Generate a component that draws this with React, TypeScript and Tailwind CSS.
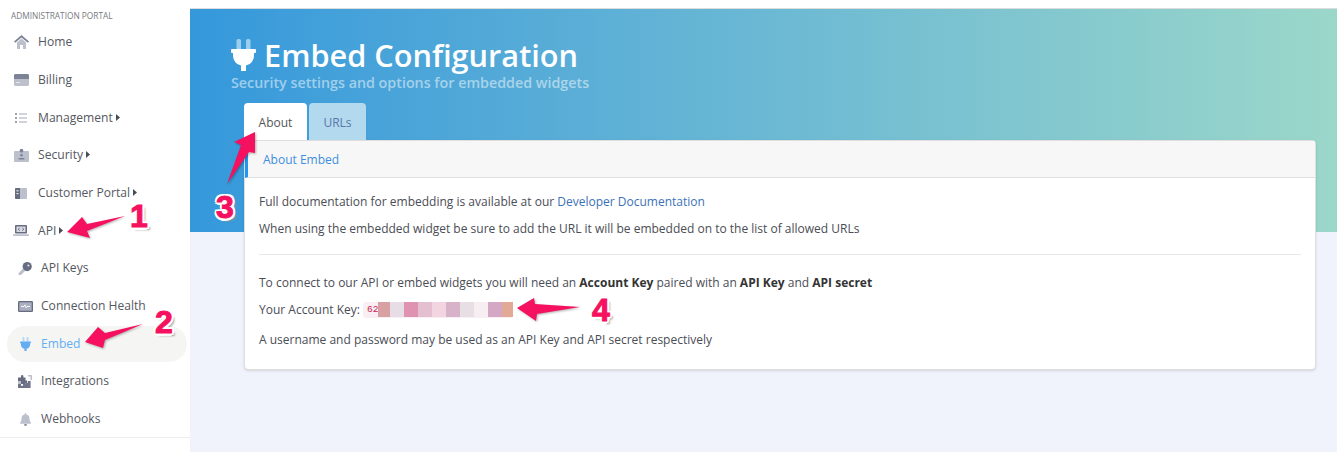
import type { ReactNode } from "react";

const D = "#7d8396";
const L = "#bcc0cd";

const Svg = ({ w, h, vb, children }: { w: number; h: number; vb: string; children: ReactNode }) => (
  <svg width={w} height={h} viewBox={vb} className="shrink-0">{children}</svg>
);

const HomeI = () => (
  <Svg w={15} h={14} vb="0 0 15 14">
    <path d="M3 7.5 7.5 3.6 12 7.5V14H9V10H6v4H3z" fill={L} />
    <path d="M7.5 0 15 6.4 13.8 7.8 7.5 2.5 1.2 7.8 0 6.4z" fill={D} />
  </Svg>
);
const CardI = () => (
  <Svg w={15} h={12} vb="0 0 15 12">
    <rect width="15" height="12" rx="1.5" fill={L} />
    <path d="M1.5 0h12A1.5 1.5 0 0 1 15 1.5V5H0V1.5A1.5 1.5 0 0 1 1.5 0z" fill={D} />
    <rect x="2" y="8" width="4" height="1" fill="#e4e6ec" />
  </Svg>
);
const ListI = () => (
  <Svg w={12} h={10} vb="0 0 12 10">
    <rect x="0" y="0" width="2" height="2" rx="1" fill={D} />
    <rect x="0" y="4" width="2" height="2" rx="1" fill={D} />
    <rect x="0" y="8" width="2" height="2" rx="1" fill={D} />
    <rect x="4" y="0.3" width="8" height="1.4" fill={L} />
    <rect x="4" y="4.3" width="8" height="1.4" fill={L} />
    <rect x="4" y="8.3" width="8" height="1.4" fill={L} />
  </Svg>
);
const BadgeI = () => (
  <Svg w={15} h={13} vb="0 0 15 13">
    <rect y="2" width="15" height="11" rx="1" fill={L} />
    <rect x="5.8" y="0" width="3.4" height="3.4" rx="0.8" fill={D} />
    <circle cx="7.5" cy="6.3" r="1.3" fill={D} />
    <rect x="4.6" y="9" width="5.8" height="1.6" rx="0.4" fill={D} />
  </Svg>
);
const BookI = () => (
  <Svg w={12} h={11} vb="0 0 12 11">
    <rect width="12" height="11" rx="1" fill={L} />
    <path d="M1 0h4v11H1a1 1 0 0 1-1-1V1a1 1 0 0 1 1-1z" fill="#676d80" />
    <rect x="1.5" y="2.2" width="2" height="1.2" fill="#e4e6ec" />
    <rect x="1.5" y="5" width="2" height="1.2" fill="#e4e6ec" />
  </Svg>
);
const LaptopI = () => (
  <Svg w={16} h={11} vb="0 0 16 11">
    <rect x="2" y="0" width="12" height="8.5" rx="0.8" fill="#676d80" />
    <rect x="3.5" y="1.5" width="9" height="5.5" fill="#d9dbe3" />
    <path d="M6.7 3 5.2 4.3 6.7 5.5M9.3 3l1.5 1.3-1.5 1.2" stroke="#5a6072" strokeWidth="1" fill="none" />
    <rect x="0" y="9.3" width="16" height="1.7" rx="0.7" fill={L} />
  </Svg>
);
const KeyI = () => (
  <Svg w={14} h={13} vb="0 0 14 13">
    <path d="M5.6 6 0.6 11v2h2.4l5-5z" fill={L} />
    <circle cx="9.2" cy="4.6" r="4.6" fill="#676d80" />
    <circle cx="10.4" cy="3.4" r="1" fill="#e4e6ec" />
  </Svg>
);
const PulseI = () => (
  <Svg w={15} h={11} vb="0 0 15 11">
    <rect width="15" height="11" rx="1.2" fill="#676d80" />
    <rect x="1.3" y="1.3" width="12.4" height="8.4" fill="#aab0bf" />
    <path d="M3 5.5h3l1-1.6 1.2 3 .8-1.4h3" stroke="#fff" strokeWidth="0.9" fill="none" />
  </Svg>
);
const PlugI = ({ w, h, body, prong }: { w: number; h: number; body: string; prong: string }) => (
  <Svg w={w} h={h} vb="0 0 25 32">
    <rect x="5.5" y="0" width="4.5" height="11" rx="1.5" fill={prong} />
    <rect x="15" y="0" width="4.5" height="11" rx="1.5" fill={prong} />
    <path d="M1 10h23a1 1 0 0 1 1 1v2a1 1 0 0 1-1 1h-1v3a10 10 0 0 1-8 9.6V32H10v-5.4A10 10 0 0 1 2 17v-3H1a1 1 0 0 1-1-1v-2a1 1 0 0 1 1-1z" fill={body} />
  </Svg>
);
const PuzzleI = () => (
  <Svg w={14} h={13} vb="0 0 14 13">
    <path d="M0 2.5h3V1.2a1.2 1.2 0 0 1 2.4 0V2.5H7.5v3H9V8H7.5v1H0z" fill="#676d80" />
    <path d="M0 9h3v1a1 1 0 0 0 2 0V9h2.5V8H9a1 1 0 0 0 0-2h3.6v7H0z" fill="#70768a" />
    <path d="M10 0h3.2A.8.8 0 0 1 14 .8V5h-1.6V1.6H10z" fill={L} />
    <path d="M0 6h3v3H0z" fill={L} />
  </Svg>
);
const BellI = () => (
  <Svg w={11} h={13} vb="0 0 11 13">
    <path d="M5.5 0C6 0 6.3.4 6.3.9v.5A3.8 3.8 0 0 1 9.4 5.2c0 3.3 1.6 4.2 1.6 4.9 0 .4-.3.7-.7.7H.7c-.4 0-.7-.3-.7-.7 0-.7 1.6-1.6 1.6-4.9A3.8 3.8 0 0 1 4.7 1.4V.9C4.7.4 5 0 5.5 0z" fill={L} />
    <path d="M3.9 11.3h3.2a1.6 1.6 0 0 1-3.2 0z" fill={D} />
  </Svg>
);

type Item = { icon: ReactNode; label: string; caret?: boolean; sub?: boolean; active?: boolean };

const items: Item[] = [
  { icon: <HomeI />, label: "Home" },
  { icon: <CardI />, label: "Billing" },
  { icon: <ListI />, label: "Management", caret: true },
  { icon: <BadgeI />, label: "Security", caret: true },
  { icon: <BookI />, label: "Customer Portal", caret: true },
  { icon: <LaptopI />, label: "API", caret: true },
  { icon: <KeyI />, label: "API Keys", sub: true },
  { icon: <PulseI />, label: "Connection Health", sub: true },
  { icon: <PlugI w={11} h={14} body="#63aef2" prong="#b7d8f7" />, label: "Embed", sub: true, active: true },
  { icon: <PuzzleI />, label: "Integrations", sub: true },
  { icon: <BellI />, label: "Webhooks", sub: true },
];

function Row({ item }: { item: Item }) {
  return (
    <div className={`flex h-[36px] mb-[1.7px] items-center rounded-[18px] ${item.sub ? "pl-[10px]" : "pl-[6px]"} ${item.active ? "bg-[#f5f5f3] text-[#63aef2]" : "text-[#55585f]"}`}>
      <span className="flex w-[16px] shrink-0 items-center justify-center">{item.icon}</span>
      <span className={`${item.sub ? "ml-[8px]" : "ml-[9px]"} text-[12.1px] leading-none`}>{item.label}</span>
      {item.caret && (
        <svg width="4" height="7" viewBox="0 0 4 7" className="ml-[3px] -mt-[1px]"><path d="M0 0 4 3.5 0 7z" fill="#4a4d55" /></svg>
      )}
    </div>
  );
}

function Num({ children, className }: { children: ReactNode; className: string }) {
  return (
    <span
      className={`absolute font-bold text-[32px] leading-none text-[#f5115f] ${className}`}
      style={{ fontFamily: '"Liberation Sans", sans-serif', WebkitTextStroke: "1px #f5115f", textShadow: "2.5px 0 0 #fff,-2.5px 0 0 #fff,0 2.5px 0 #fff,0 -2.5px 0 #fff,2px 2px 0 #fff,-2px -2px 0 #fff,2px -2px 0 #fff,-2px 2px 0 #fff,3px 3px 2px #999" }}
    >
      {children}
    </span>
  );
}

const arrows = [
  "125,216 87,224 82,217 67,232 90,238 87,231",
  "143,324 105,333 98,327 85,342 103,348 105,340",
  "227,184 241,145 234,142 255,132 255,153 249,152",
  "580,307 535,304 534,298 517,308 536,321 537,314",
];

const blurs = ["#d9a0a3", "#e7dde6", "#df93b0", "#e3bfcf", "#f2d5e0", "#d7b2c9", "#e8dfe4", "#f6eef1", "#d4a8c4"];

export default function App() {
  return (
    <div className="relative flex h-[452px] w-[1337px] overflow-hidden bg-[#f0f3fb] text-[12px] text-[#4a4d55]" style={{ fontFamily: '"Open Sans", sans-serif' }}>
      <aside className="w-[190px] shrink-0 bg-white">
        <div className="h-[438px] border-b border-[#ececec] pl-[7px] pr-[3px] pt-[10px]">
          <div className="ml-[4px] text-[8.3px] leading-[12px] text-[#777a80]">ADMINISTRATION PORTAL</div>
          <nav className="mt-[2.3px]">
            {items.map((i) => <Row key={i.label} item={i} />)}
          </nav>
        </div>
      </aside>
      <main className="flex-1 min-w-0">
        <div className="h-[9px] bg-white border-b border-[#dcdcdc]" />
        <div className="h-[223px] bg-gradient-to-r from-[#3498db] to-[#9bd7c9] pl-[41px] pt-[28px]">
          <div className="flex h-[36px] items-center gap-[8px] text-white">
            <PlugI w={25} h={32} body="#ffffff" prong="rgba(255,255,255,0.5)" />
            <h1 className="text-[30.7px] leading-[36px] font-semibold">Embed Configuration</h1>
          </div>
          <p className="text-[14.3px] leading-[20px] font-semibold text-white/50">Security settings and options for embedded widgets</p>
        </div>
        <section className="-mt-[129px] ml-[54px] mr-[21px]">
          <div className="flex gap-[2px] h-[37px]">
            <div className="flex w-[63px] items-center justify-center rounded-t-[4px] bg-white pt-[2px] text-[#555]">About</div>
            <div className="flex w-[57px] items-center justify-center rounded-t-[4px] bg-[#b3d9ef] pt-[2px] text-[#5a77a8]">URLs</div>
          </div>
          <div className="h-[230px] rounded-b-[4px] rounded-tr-[4px] border border-[#dedede] bg-white shadow-sm">
            <div className="flex h-[37px] items-center border-b border-[#dedede] border-l-[3px] border-l-[#2196f3] bg-[#f7f7f7] pl-[15px] pt-[2px] text-[#3f8fe0]">About Embed</div>
            <div className="px-[14px] pt-[10px] leading-[27px]">
              <p>Full documentation for embedding is available at our <a className="text-[#3c72b8]">Developer Documentation</a></p>
              <p>When using the embedded widget be sure to add the URL it will be embedded on to the list of allowed URLs</p>
              <hr className="mt-[12px] mb-[14px] border-[#e8e8e8]" />
              <p>To connect to our API or embed widgets you will need an <b className="font-bold text-[#333]">Account Key</b> paired with an <b className="font-bold text-[#333]">API Key</b> and <b className="font-bold text-[#333]">API secret</b></p>
              <div className="flex items-center">
                <span>Your Account Key:</span>
                <span className="ml-[3px] flex h-[16px] items-center rounded-[3px] bg-[#f8eef3] pl-[4px] text-[9.5px] text-[#c9264f]" style={{ fontFamily: '"Liberation Mono", monospace' }}>
                  62
                  {blurs.map((c, i) => <span key={i} className={`h-[15px] ${i === 0 ? "w-[12px]" : "w-[14px]"}`} style={{ background: c }} />)}
                  <span className="h-[15px] w-[11px] bg-[#e3a997]" />
                </span>
              </div>
              <p className="mt-[3px]">A username and password may be used as an API Key and API secret respectively</p>
            </div>
          </div>
        </section>
      </main>
      <svg className="absolute left-0 top-0 pointer-events-none" width="1337" height="452">
        {arrows.map((pts) => (
          <polygon key={pts} points={pts} fill="#f5115f" style={{ filter: "drop-shadow(1px 1px 1px rgba(0,0,0,.3))" }} />
        ))}
      </svg>
      <Num className="left-[130px] top-[200px]">1</Num>
      <Num className="left-[155px] top-[306px]">2</Num>
      <Num className="left-[216px] top-[191px]">3</Num>
      <Num className="left-[592px] top-[294px]">4</Num>
    </div>
  );
}
